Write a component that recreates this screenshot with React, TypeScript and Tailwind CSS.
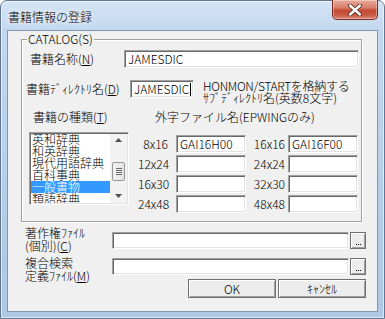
import React from "react";

const sunken =
  "border border-t-[#a0a0a0] border-l-[#a0a0a0] border-r-white border-b-white shadow-[inset_1px_1px_0_#696969,inset_-1px_-1px_0_#e3e3e3] bg-white";

function Edit({ w, h, text, caret }: { w: string; h: string; text?: string; caret?: boolean }) {
  return (
    <div className={`${w} ${h} ${sunken} flex items-center pl-[3px] overflow-hidden whitespace-nowrap`}>
      {text ? <span className="leading-[12px]">{text}</span> : null}
      {caret ? <span className="w-[1px] h-[13px] bg-black ml-[1px]" /> : null}
    </div>
  );
}

function Btn({ children, w, h }: { children: React.ReactNode; w: string; h: string }) {
  return (
    <div
      className={`${w} ${h} border border-[#707070] bg-[#ececec] shadow-[inset_1px_1px_0_#ffffff,inset_-1px_-1px_0_#a0a0a0] flex items-center justify-center leading-[12px]`}
    >
      {children}
    </div>
  );
}

function DotBtn() {
  return (
    <div className="w-[16px] h-[17px] border border-[#707070] bg-[#ececec] shadow-[inset_1px_1px_0_#ffffff,inset_-1px_-1px_0_#a0a0a0] flex items-end justify-center pb-[3px]">
      <div className="flex gap-[1px]">
        <span className="w-[1px] h-[1px] bg-black" />
        <span className="w-[1px] h-[1px] bg-black" />
        <span className="w-[1px] h-[1px] bg-black" />
      </div>
    </div>
  );
}

function CloseBtn() {
  return (
    <div className="-mt-[1px] w-[46px] h-[20px] rounded-b-[5px] border border-t-0 border-[#7a2a20] bg-[linear-gradient(180deg,#e9a99b_0%,#d7806d_40%,#c44a33_55%,#c95a44_80%,#d98a78_100%)] shadow-[inset_0_0_0_1px_rgba(255,255,255,0.35)] flex items-center justify-center">
      <svg width="14" height="12" viewBox="0 0 14 12">
        <path d="M2 1.5 L12 10.5 M12 1.5 L2 10.5" stroke="#5a2a24" strokeWidth="4.2" strokeLinecap="round" />
        <path d="M2 1.5 L12 10.5 M12 1.5 L2 10.5" stroke="#ffffff" strokeWidth="2.4" strokeLinecap="round" />
      </svg>
    </div>
  );
}

const items = ["英和辞典", "和英辞典", "現代用語辞典", "百科事典", "一般書物", "類語辞典", "その他"];

function ListBox() {
  return (
    <div className={`w-[100px] h-[73px] mt-[9px] ${sunken} flex p-[1px] overflow-hidden`}>
      <div className="w-[80px] h-full overflow-hidden">
        <div className="-mt-[1px] flex flex-col">
          {items.map((t, i) => (
            <div
              key={t}
              className={
                i === 4
                  ? "h-[12px] leading-[12px] pl-[1px] bg-[#3399ff] text-white whitespace-nowrap"
                  : "h-[12px] leading-[12px] pl-[1px] whitespace-nowrap"
              }
            >
              {t}
            </div>
          ))}
        </div>
      </div>
      <div className="w-[17px] h-full bg-[#f2f2f2] flex flex-col items-center">
        <div className="h-[17px] w-full flex items-start justify-center pt-[4px]">
          <svg width="7" height="4" viewBox="0 0 7 4">
            <path d="M0 4 L3.5 0 L7 4 Z" fill="#505050" />
          </svg>
        </div>
        <div className="mt-[11px] w-[13px] h-[19px] rounded-[2px] border border-[#959595] bg-[linear-gradient(90deg,#f3f3f3,#e2e2e2)] flex flex-col items-center justify-center gap-[1px]">
          <span className="w-[6px] h-[1px] bg-[#6c6c6c]" />
          <span className="w-[6px] h-[1px] bg-[#6c6c6c]" />
          <span className="w-[6px] h-[1px] bg-[#6c6c6c]" />
          <span className="w-[6px] h-[1px] bg-[#6c6c6c]" />
        </div>
        <div className="flex-1" />
        <div className="h-[17px] w-full flex items-end justify-center pb-[5px]">
          <svg width="7" height="4" viewBox="0 0 7 4">
            <path d="M0 0 L7 0 L3.5 4 Z" fill="#505050" />
          </svg>
        </div>
      </div>
    </div>
  );
}

function GaijiRow({ a, av, b, bv }: { a: string; av?: string; b: string; bv?: string }) {
  return (
    <div className="flex items-center h-[18px]">
      <div className="w-[30px] text-right leading-[12px]">{a}</div>
      <div className="ml-[8px]">
        <Edit w="w-[70px]" h="h-[18px]" text={av} />
      </div>
      <div className="w-[39px] text-right leading-[12px]">{b}</div>
      <div className="ml-[3px]">
        <Edit w="w-[70px]" h="h-[18px]" text={bv} />
      </div>
    </div>
  );
}

export default function App() {
  return (
    <div className="w-[385px] h-[319px] overflow-hidden bg-white font-['Noto_Sans_CJK_JP',sans-serif] font-light text-[12px] leading-[12px] text-black">
      <div className="w-[385px] h-[319px] flex flex-col rounded-t-[7px] border border-[#5f7590] bg-[linear-gradient(180deg,#d4e4f5_0px,#c3d8ef_28px,#b6cde9_60%,#aec7e5_100%)] px-[6px] pb-[6px] shadow-[inset_0_0_0_1px_rgba(255,255,255,0.6)]">
        <div className="h-[29px] flex justify-between items-start">
          <div className="mt-[9px] ml-[1px] leading-[14px] text-[12px] [text-shadow:0_0_5px_#ffffff,0_0_8px_#ffffff]">
            書籍情報の登録
          </div>
          <CloseBtn />
        </div>
        <div className="h-[282px] border border-[#8397b3] bg-[#f0f0f0] flex flex-col">
          {/* Group box */}
          <div className="relative ml-[13px] mt-[8px] w-[341px] h-[183px] border border-[#a0a0a0] shadow-[1px_1px_0_#ffffff,inset_1px_1px_0_#ffffff] flex flex-col">
            <span className="absolute left-[5px] -top-[7px] px-[1px] bg-[#f0f0f0] leading-[12px]">CATALOG(S)</span>
            {/* row 1 */}
            <div className="mt-[10px] flex items-center h-[18px]">
              <div className="ml-[8px] w-[94px]">
                書籍名称(<span className="underline">N</span>)
              </div>
              <Edit w="w-[235px]" h="h-[18px]" text="JAMESDIC" />
            </div>
            {/* row 2 */}
            <div className="mt-[12px] flex items-start">
              <div className="ml-[4px] w-[104px] h-[18px] flex items-center whitespace-nowrap">
                書籍ﾃﾞｨﾚｸﾄﾘ名(<span className="underline">D</span>)
              </div>
              <Edit w="w-[64px]" h="h-[18px]" text="JAMESDIC" caret />
              <div className="ml-[9px] leading-[12px] whitespace-nowrap">
                <div className="tracking-[-0.3px]">HONMON/STARTを格納する</div>
                <div>ｻﾌﾞﾃﾞｨﾚｸﾄﾘ名(英数8文字)</div>
              </div>
            </div>
            {/* section 3 */}
            <div className="mt-[7px] flex items-start">
              <div className="ml-[7px] w-[100px] flex flex-col">
                <div className="ml-[4px] h-[12px] whitespace-nowrap">
                  書籍の種類(<span className="underline">T</span>)
                </div>
                <ListBox />
              </div>
              <div className="ml-[9px] flex flex-col">
                <div className="ml-[17px] h-[12px] whitespace-nowrap">外字ファイル名(EPWINGのみ)</div>
                <div className="mt-[12px] flex flex-col gap-[2px]">
                  <GaijiRow a="8x16" av="GAI16H00" b="16x16" bv="GAI16F00" />
                  <GaijiRow a="12x24" b="24x24" />
                  <GaijiRow a="16x30" b="32x30" />
                  <GaijiRow a="24x48" b="48x48" />
                </div>
              </div>
            </div>
          </div>
          {/* copyright row */}
          <div className="mt-[4px] flex items-start">
            <div className="ml-[17px] w-[87px] leading-[13px] whitespace-nowrap">
              <div>著作権ﾌｧｲﾙ</div>
              <div>
                (個別)(<span className="underline">C</span>)
              </div>
            </div>
            <div className="mt-[6px]">
              <Edit w="w-[237px]" h="h-[17px]" />
            </div>
            <div className="mt-[6px] ml-[1px]">
              <DotBtn />
            </div>
          </div>
          {/* search def row */}
          <div className="mt-[4px] h-[23px] flex items-start">
            <div className="ml-[17px] w-[87px] leading-[13px] whitespace-nowrap">
              <div>複合検索</div>
              <div>
                定義ﾌｧｲﾙ(<span className="underline">M</span>)
              </div>
            </div>
            <div className="mt-[2px]">
              <Edit w="w-[237px]" h="h-[17px]" />
            </div>
            <div className="mt-[2px] ml-[1px]">
              <DotBtn />
            </div>
          </div>
          {/* buttons */}
          <div className="flex justify-end gap-[2px] mr-[11px]">
            <Btn w="w-[88px]" h="h-[19px]">OK</Btn>
            <Btn w="w-[88px]" h="h-[19px]">ｷｬﾝｾﾙ</Btn>
          </div>
        </div>
      </div>
    </div>
  );
}
